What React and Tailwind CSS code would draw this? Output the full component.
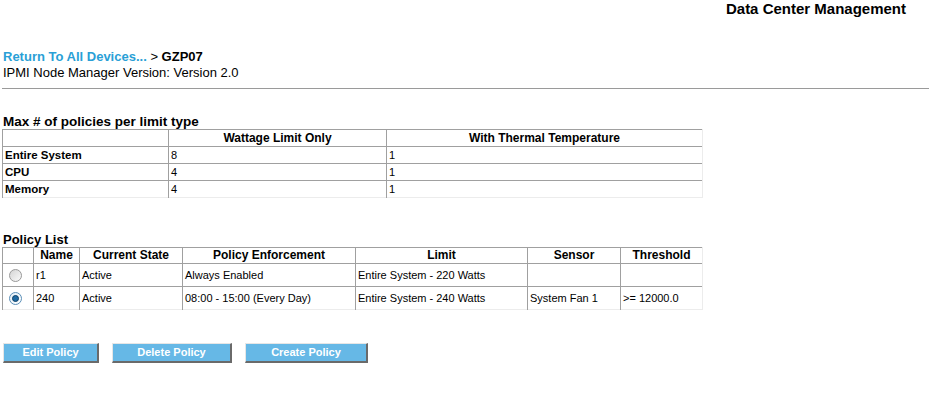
export default function App() {
  const font = { fontFamily: '"Liberation Sans", Arial, Helvetica, sans-serif' };
  const B = "border-t border-l border-[#a0a0a0]";
  const H = "text-[12px] font-bold text-center";
  const limits = [
    ["Entire System", "8", "1"],
    ["CPU", "4", "1"],
    ["Memory", "4", "1"],
  ];
  const policies = [
    { checked: false, name: "r1", state: "Active", enf: "Always Enabled", limit: "Entire System - 220 Watts", sensor: "", thr: "" },
    { checked: true, name: "240", state: "Active", enf: "08:00 - 15:00 (Every Day)", limit: "Entire System - 240 Watts", sensor: "System Fan 1", thr: ">= 12000.0" },
  ];
  const Radio = ({ checked }) =>
    checked ? (
      <span className="inline-flex w-[13px] h-[13px] rounded-full border border-[#5b8fb8] bg-gradient-to-br from-[#e4eef6] to-[#ffffff] items-center justify-center">
        <span className="w-[7px] h-[7px] rounded-full bg-[#1f6aa3] border border-[#0d3f66]" />
      </span>
    ) : (
      <span className="inline-block w-[13px] h-[13px] rounded-full border border-[#9a9a9a] bg-gradient-to-br from-[#d4d4d4] to-[#fafafa]" />
    );
  const Btn = ({ children, w }) => (
    <button
      className={`h-[20px] ${w} bg-[#66b8e6] text-white font-bold text-[11px] leading-none border-t border-l border-t-[#e6e6e6] border-l-[#e6e6e6] border-r-2 border-b-2 border-r-[#6a6a6a] border-b-[#6a6a6a]`}
      style={font}
    >
      {children}
    </button>
  );
  return (
    <div className="w-[929px] h-[393px] bg-white text-black overflow-hidden" style={font}>
      <div className="flex justify-end pr-[23px] pt-[1px]">
        <div className="text-[15px] leading-[16px] font-bold">Data Center Management</div>
      </div>
      <div className="pl-[3px] mt-[32px]">
        <div className="text-[13px] leading-[16px] font-bold">
          <span className="text-[#2a9fd6]">Return To All Devices...</span>
          <span className="font-normal"> &gt; </span>
          <span>GZP07</span>
        </div>
        <div className="text-[13px] leading-[16px]">IPMI Node Manager Version: Version 2.0</div>
      </div>
      <div className="ml-[2px] mt-[7px] h-[1px] bg-[#9a9a9a]" />
      <div className="pl-[3px] mt-[25px] text-[13.5px] leading-[15px] font-bold">Max # of policies per limit type</div>
      <table className="ml-[2px] border-collapse text-[11px] leading-[13px] w-[700px] table-fixed">
        <colgroup>
          <col className="w-[166px]" />
          <col className="w-[218px]" />
          <col className="w-[316px]" />
        </colgroup>
        <thead>
          <tr className="h-[17px]">
            <th className={B}></th>
            <th className={`${B} ${H}`}>Wattage Limit Only</th>
            <th className={`${B} border-r border-r-[#ececec] ${H}`}>With Thermal Temperature</th>
          </tr>
        </thead>
        <tbody>
          {limits.map((r, i) => (
            <tr key={i} className={`h-[17px] ${i === limits.length - 1 ? "border-b border-[#ececec]" : ""}`}>
              <td className={`${B} px-[2px] font-bold text-[11.5px]`}>{r[0]}</td>
              <td className={`${B} px-[2px]`}>{r[1]}</td>
              <td className={`${B} border-r border-r-[#ececec] px-[2px]`}>{r[2]}</td>
            </tr>
          ))}
        </tbody>
      </table>
      <div className="pl-[3px] mt-[34px] text-[13px] leading-[15px] font-bold">Policy List</div>
      <table className="ml-[2px] border-collapse text-[11px] leading-[13px] w-[700px] table-fixed">
        <colgroup>
          <col className="w-[31px]" />
          <col className="w-[46px]" />
          <col className="w-[103px]" />
          <col className="w-[173px]" />
          <col className="w-[172px]" />
          <col className="w-[93px]" />
          <col className="w-[82px]" />
        </colgroup>
        <thead>
          <tr className="h-[16px]">
            <th className={B}></th>
            <th className={`${B} ${H}`}>Name</th>
            <th className={`${B} ${H}`}>Current State</th>
            <th className={`${B} ${H}`}>Policy Enforcement</th>
            <th className={`${B} ${H}`}>Limit</th>
            <th className={`${B} ${H}`}>Sensor</th>
            <th className={`${B} border-r border-r-[#ececec] ${H}`}>Threshold</th>
          </tr>
        </thead>
        <tbody>
          {policies.map((p, i) => (
            <tr key={i} className={`h-[23px] ${i === policies.length - 1 ? "border-b border-[#ececec]" : ""}`}>
              <td className={`${B} pl-[6px] align-middle`}>
                <div className="flex items-center">
                  <Radio checked={p.checked} />
                </div>
              </td>
              <td className={`${B} px-[2px]`}>{p.name}</td>
              <td className={`${B} px-[2px]`}>{p.state}</td>
              <td className={`${B} px-[2px]`}>{p.enf}</td>
              <td className={`${B} px-[2px]`}>{p.limit}</td>
              <td className={`${B} px-[2px]`}>{p.sensor}</td>
              <td className={`${B} border-r border-r-[#ececec] px-[2px]`}>{p.thr}</td>
            </tr>
          ))}
        </tbody>
      </table>
      <div className="flex gap-[13px] pl-[3px] mt-[33px]">
        <Btn w="w-[96px]">Edit Policy</Btn>
        <Btn w="w-[120px]">Delete Policy</Btn>
        <Btn w="w-[123px]">Create Policy</Btn>
      </div>
    </div>
  );
}
